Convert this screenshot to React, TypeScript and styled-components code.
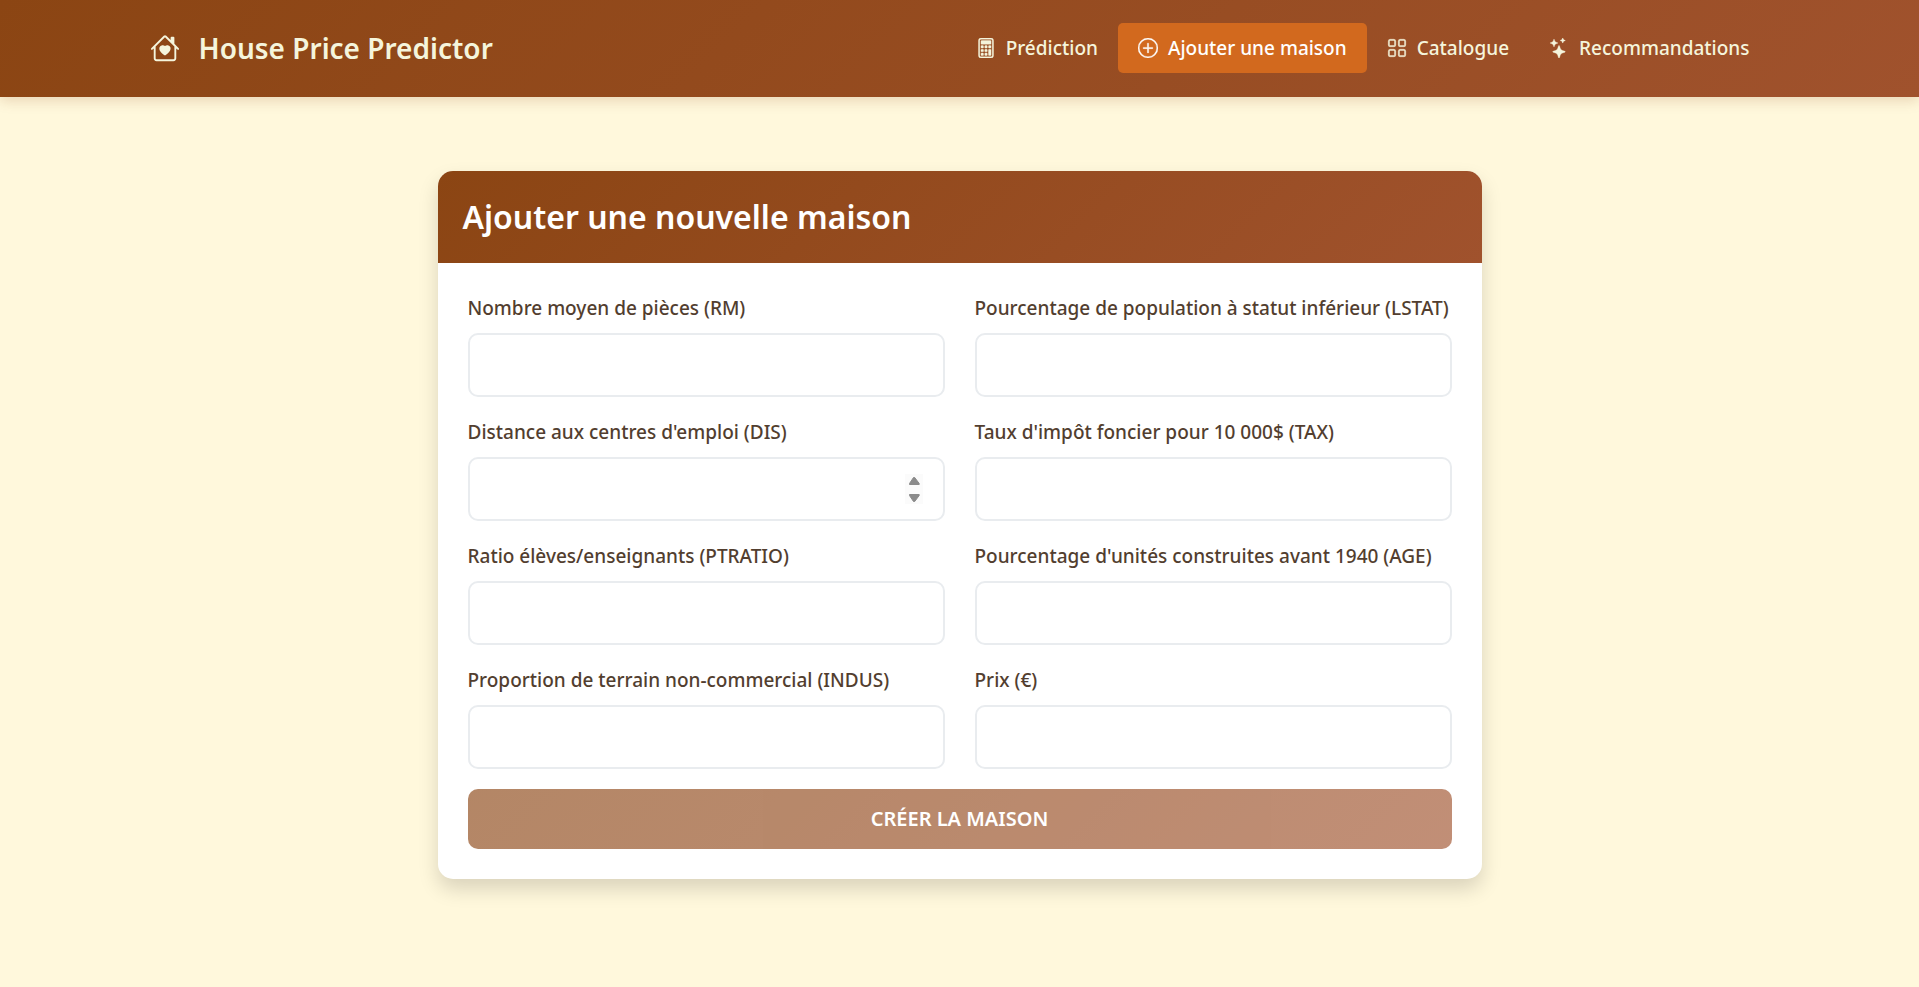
import React from 'react';
import styled, { createGlobalStyle } from 'styled-components';
import { BsCalculator, BsGrid, BsHouseHeart, BsPlusCircle, BsStars } from 'react-icons/bs';

const GlobalStyle = createGlobalStyle`
  *, *::before, *::after { box-sizing: border-box; }
  body {
    margin: 0;
    min-height: 100vh;
    background: #fff8dc;
    color: #523e2f;
    font-family: 'Segoe UI', 'Noto Sans', sans-serif;
    font-size: 19px;
    line-height: 30px;
  }
  button, input { font: inherit; }
`;

const Header = styled.header`
  background: linear-gradient(135deg, #8b4513, #a0522d);
  box-shadow: 0 4px 12px rgba(139, 69, 19, 0.18);
`;

const HeaderInner = styled.div`
  display: flex;
  align-items: center;
  justify-content: space-between;
  max-width: 1650px;
  margin: 0 auto;
  padding: 23px 15px 24px;
`;

const Brand = styled.a`
  display: flex;
  align-items: center;
  gap: 19px;
  color: #f5f5dc;
  font-size: 28px;
  font-weight: 600;
  text-decoration: none;
  white-space: nowrap;

  svg { width: 30px; height: 30px; }
`;

const Nav = styled.nav`
  display: flex;
`;

const NavLink = styled.a<{ $active?: boolean }>`
  display: flex;
  align-items: center;
  gap: 10px;
  padding: 10px 20px;
  border-radius: 5px;
  background: ${({ $active }) => ($active ? '#d2691e' : 'transparent')};
  color: ${({ $active }) => ($active ? '#ffffff' : '#f5f5dc')};
  font-weight: 500;
  text-decoration: none;
  white-space: nowrap;

  svg {
    width: 20px;
    height: 20px;
    stroke-width: 0.3;
  }
`;

const Main = styled.main`
  padding: 74px 15px;
`;

const Card = styled.section`
  max-width: 1044px;
  margin: 0 auto;
  overflow: hidden;
  border-radius: 15px;
  background: #ffffff;
  box-shadow: 0 10px 20px rgba(0, 0, 0, 0.15);
`;

const CardHeader = styled.div`
  padding: 25px;
  background: linear-gradient(135deg, #8b4513, #a0522d);
`;

const CardTitle = styled.h1`
  margin: 0;
  color: #ffffff;
  font-size: 32px;
  font-weight: 600;
  line-height: 42px;
`;

const Form = styled.form`
  display: grid;
  grid-template-columns: repeat(auto-fit, minmax(min(400px, 100%), 1fr));
  gap: 20px 30px;
  padding: 30px;
`;

const Field = styled.div`
  display: flex;
  flex-direction: column;
  gap: 10px;
`;

const Label = styled.label`
  font-weight: 500;
`;

const InputWrap = styled.div`
  position: relative;
`;

const Input = styled.input`
  display: block;
  width: 100%;
  height: 64px;
  padding: 15px 20px;
  border: 2px solid #e9ecef;
  border-radius: 10px;
  background: #ffffff;
  color: inherit;
  appearance: textfield;

  &::-webkit-inner-spin-button { appearance: none; }
`;

const Stepper = styled.svg`
  position: absolute;
  top: 17px;
  right: 22px;
  width: 18px;
  height: 30px;
  background: #fbfbfb;
  fill: #8b8b8b;
  stroke: #8b8b8b;
  stroke-width: 1;
  stroke-linejoin: round;
  pointer-events: none;
`;

const SubmitButton = styled.button`
  grid-column: 1 / -1;
  padding: 15px;
  border: 0;
  border-radius: 10px;
  background: linear-gradient(135deg, #8b4513, #a0522d);
  color: #ffffff;
  font-size: 20px;
  font-weight: 600;
  text-transform: uppercase;

  &:disabled { opacity: 0.65; }
`;

const links = [
  { label: 'Prédiction', Icon: BsCalculator },
  { label: 'Ajouter une maison', Icon: BsPlusCircle, active: true },
  { label: 'Catalogue', Icon: BsGrid },
  { label: 'Recommandations', Icon: BsStars },
];

const fields = [
  { id: 'rm', label: 'Nombre moyen de pièces (RM)' },
  { id: 'lstat', label: 'Pourcentage de population à statut inférieur (LSTAT)' },
  { id: 'dis', label: "Distance aux centres d'emploi (DIS)", stepper: true },
  { id: 'tax', label: "Taux d'impôt foncier pour 10 000$ (TAX)" },
  { id: 'ptratio', label: 'Ratio élèves/enseignants (PTRATIO)' },
  { id: 'age', label: "Pourcentage d'unités construites avant 1940 (AGE)" },
  { id: 'indus', label: 'Proportion de terrain non-commercial (INDUS)' },
  { id: 'prix', label: 'Prix (€)' },
];

export default function App() {
  return (
    <>
      <GlobalStyle />
      <Header>
        <HeaderInner>
          <Brand href="#">
            <BsHouseHeart aria-hidden />
            House Price Predictor
          </Brand>
          <Nav>
            {links.map(({ label, Icon, active }) => (
              <NavLink key={label} href="#" $active={active} aria-current={active ? 'page' : undefined}>
                <Icon aria-hidden />
                {label}
              </NavLink>
            ))}
          </Nav>
        </HeaderInner>
      </Header>
      <Main>
        <Card>
          <CardHeader>
            <CardTitle>Ajouter une nouvelle maison</CardTitle>
          </CardHeader>
          <Form>
            {fields.map(({ id, label, stepper }) => (
              <Field key={id}>
                <Label htmlFor={id}>{label}</Label>
                <InputWrap>
                  <Input id={id} name={id} type="number" step="any" />
                  {stepper && (
                    <Stepper viewBox="0 0 18 30" aria-hidden>
                      <path d="M8.5 3.5 h1.2 L14.2 9.5 V10.5 H4.5 V9.5 Z M8.5 27.5 h1.2 L14.2 21.5 V20.5 H4.5 V21.5 Z" />
                    </Stepper>
                  )}
                </InputWrap>
              </Field>
            ))}
            <SubmitButton type="submit" disabled>
              Créer la maison
            </SubmitButton>
          </Form>
        </Card>
      </Main>
    </>
  );
}
